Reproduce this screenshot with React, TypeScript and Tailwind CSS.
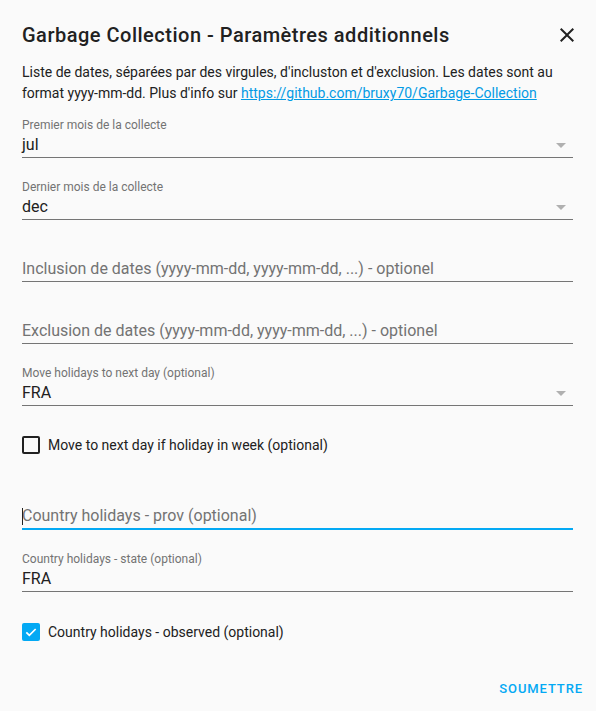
const font = { fontFamily: "Roboto, 'Noto Sans', Arial, sans-serif" };

const Arrow = () => (
  <div className="absolute right-[7px] top-[26px] h-0 w-0 border-l-[5px] border-r-[5px] border-t-[5px] border-l-transparent border-r-transparent border-t-[#b0b0b0]" />
);

const SelectField = ({ label, value, className = "" }: { label: string; value: string; className?: string }) => (
  <div className={`relative border-b border-[#757575] ${className}`}>
    <div className="h-[16px] text-[12px] leading-[16px] text-[#737373]">{label}</div>
    <div className="h-[24px] text-[16px] leading-[24px] text-[#212121]">{value}</div>
    <Arrow />
  </div>
);

const TextField = ({ label, value, className = "" }: { label: string; value: string; className?: string }) => (
  <div className={`border-b border-[#757575] ${className}`}>
    <div className="h-[16px] text-[12px] leading-[16px] text-[#737373]">{label}</div>
    <div className="h-[24px] text-[16px] leading-[24px] text-[#212121]">{value}</div>
  </div>
);

const EmptyField = ({ placeholder, className = "", focused = false }: { placeholder: string; className?: string; focused?: boolean }) => (
  <div className={`${focused ? "border-b-2 border-[#03a9f4]" : "border-b border-[#757575]"} ${className}`}>
    <div className="h-[16px]" />
    <div className="relative h-[24px] text-[16px] leading-[24px] text-[#737373]">
      {focused && <span className="absolute left-0 top-[4px] h-[17px] w-px bg-[#212121]" />}
      {placeholder}
    </div>
  </div>
);

const Checkbox = ({ label, checked, className = "" }: { label: string; checked?: boolean; className?: string }) => (
  <div className={`flex h-[36px] items-center gap-[8px] ${className}`}>
    {checked ? (
      <div className="flex h-[18px] w-[18px] items-center justify-center rounded-[2px] bg-[#03a9f4]">
        <svg viewBox="0 0 24 24" className="h-[16px] w-[16px]">
          <path d="M5 12.5l4.5 4.5L19 7.5" fill="none" stroke="white" strokeWidth="2.6" />
        </svg>
      </div>
    ) : (
      <div className="h-[18px] w-[18px] rounded-[2px] border-2 border-[#212121]" />
    )}
    <span className="text-[14px] leading-[20px] text-[#212121]">{label}</span>
  </div>
);

export default function App() {
  return (
    <div className="min-h-[711px] w-[596px] bg-[#fafafa]" style={font}>
      <div className="px-[22px] pt-[19px]">
        <div className="flex h-[32px] items-center justify-between">
          <h2 className="text-[20px] font-medium leading-[32px] tracking-[0.5px] text-[#212121]">
            Garbage Collection - Paramètres additionnels
          </h2>
          <svg viewBox="0 0 24 24" className="mr-[-5px] h-[24px] w-[24px]">
            <path d="M19 6.41L17.59 5 12 10.59 6.41 5 5 6.41 10.59 12 5 17.59 6.41 19 12 13.41 17.59 19 19 17.59 13.41 12z" fill="#212121" />
          </svg>
        </div>
        <p className="mt-[11px] text-[14px] leading-[21px] text-[#212121]">
          Liste de dates, séparées par des virgules, d'incluston et d'exclusion. Les dates sont au format yyyy-mm-dd. Plus d'info sur{" "}
          <a className="text-[#039be5] underline" href="#">https://github.com/bruxy70/Garbage-Collection</a>
        </p>
        <div className="mr-[1px] flex flex-col">
          <SelectField className="mt-[13px]" label="Premier mois de la collecte" value="jul" />
          <SelectField className="mt-[21px]" label="Dernier mois de la collecte" value="dec" />
          <EmptyField className="mt-[21px]" placeholder="Inclusion de dates (yyyy-mm-dd, yyyy-mm-dd, ...) - optionel" />
          <EmptyField className="mt-[21px]" placeholder="Exclusion de dates (yyyy-mm-dd, yyyy-mm-dd, ...) - optionel" />
          <SelectField className="mt-[21px]" label="Move holidays to next day (optional)" value="FRA" />
          <Checkbox className="mt-[21px]" label="Move to next day if holiday in week (optional)" />
          <EmptyField className="mt-[25px]" focused placeholder="Country holidays - prov (optional)" />
          <TextField className="mt-[21px]" label="Country holidays - state (optional)" value="FRA" />
          <Checkbox className="mt-[22px]" checked label="Country holidays - observed (optional)" />
        </div>
        <div className="mt-[21px] flex justify-end">
          <button className="mr-[-17px] h-[36px] px-[8px] text-[13px] font-medium uppercase tracking-[0.9px] text-[#03a9f4]">
            Soumettre
          </button>
        </div>
      </div>
    </div>
  );
}
